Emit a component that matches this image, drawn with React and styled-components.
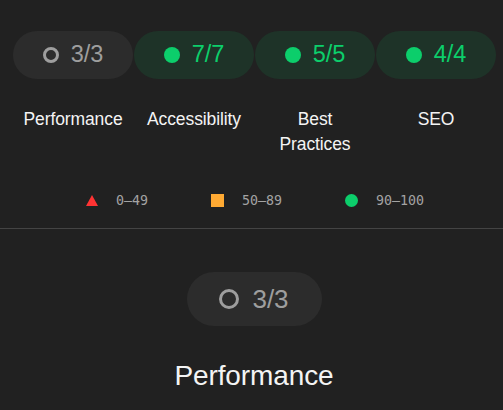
import React from "react";
import styled, { createGlobalStyle } from "styled-components";

const Global = createGlobalStyle`
  html, body { margin: 0; padding: 0; background: #212121; }
  body { font-family: "Liberation Sans", Arial, sans-serif; }
`;

const Page = styled.div`
  width: 503px;
  height: 410px;
  overflow: hidden;
  background: #212121;
  padding-top: 31px;
  box-sizing: border-box;
`;

const Container = styled.div`
  width: 484px;
  margin-left: 13px;
`;

const Gauges = styled.div`
  display: grid;
  grid-template-columns: repeat(4, 120px);
  column-gap: 1px;
`;

const Gauge = styled.div`
  display: flex;
  flex-direction: column;
  align-items: center;
`;

const Pill = styled.div`
  display: flex;
  align-items: center;
  justify-content: center;
  gap: ${(p) => (p.$big ? 13 : 12)}px;
  width: ${(p) => (p.$big ? 135 : 120)}px;
  height: ${(p) => (p.$big ? 54 : 48)}px;
  border-radius: 27px;
  background: ${(p) => (p.$pass ? "#1e3328" : "#2c2c2c")};
  color: ${(p) => (p.$pass ? "#0cce6b" : "#9e9e9e")};
  font-size: ${(p) => (p.$big ? 26 : 23.5)}px;
  line-height: 1;
  box-sizing: border-box;
`;

const Ring = styled.span`
  display: block;
  width: ${(p) => p.$size}px;
  height: ${(p) => p.$size}px;
  border-radius: 50%;
  box-sizing: border-box;
  border: ${(p) => (p.$pass ? "none" : `${p.$size > 17 ? 3.5 : 3}px solid #9e9e9e`)};
  background: ${(p) => (p.$pass ? "#0cce6b" : "transparent")};
  flex: none;
`;

const Label = styled.div`
  margin-top: 28px;
  color: #f4f4f4;
  font-size: 17.5px;
  line-height: 25px;
  text-align: center;
  letter-spacing: -0.1px;
  width: 120px;
`;

const Legend = styled.div`
  display: flex;
  justify-content: center;
  align-items: center;
  height: 20px;
  margin-top: 33px;
  gap: 63px;
`;

const LegendItem = styled.div`
  display: flex;
  align-items: center;
  gap: 18px;
  font-family: "DejaVu Sans Mono", "Liberation Mono", monospace;
  font-size: 13.3px;
  color: #a3a3a3;
`;

const Triangle = styled.span`
  display: block;
  width: 0;
  height: 0;
  border-left: 6px solid transparent;
  border-right: 6px solid transparent;
  border-bottom: 11px solid #ff3333;
`;

const Square = styled.span`
  display: block;
  width: 13px;
  height: 13px;
  background: #ffaa33;
`;

const Dot = styled.span`
  display: block;
  width: 13px;
  height: 13px;
  border-radius: 50%;
  background: #0cce6b;
`;

const Divider = styled.hr`
  margin: 18px 0 0 0;
  border: none;
  border-top: 1px solid #444444;
  width: 503px;
`;

const Detail = styled.div`
  display: flex;
  flex-direction: column;
  align-items: center;
  width: 484px;
  margin-left: 12px;
  margin-top: 43px;
`;

const BigLabel = styled.div`
  margin-top: 34px;
  color: #f4f4f4;
  font-size: 28px;
  line-height: 32px;
  letter-spacing: -0.1px;
`;

const gauges = [
  { score: "3/3", label: "Performance", pass: false },
  { score: "7/7", label: "Accessibility", pass: true },
  { score: "5/5", label: "Best Practices", pass: true },
  { score: "4/4", label: "SEO", pass: true },
];

export default function App() {
  return (
    <>
      <Global />
      <Page>
        <Container>
          <Gauges>
            {gauges.map((g) => (
              <Gauge key={g.label}>
                <Pill $pass={g.pass}>
                  <Ring $pass={g.pass} $size={16} />
                  <span>{g.score}</span>
                </Pill>
                <Label>{g.label === "Best Practices" ? <>Best<br />Practices</> : g.label}</Label>
              </Gauge>
            ))}
          </Gauges>
          <Legend>
            <LegendItem>
              <Triangle />
              <span>0–49</span>
            </LegendItem>
            <LegendItem>
              <Square />
              <span>50–89</span>
            </LegendItem>
            <LegendItem>
              <Dot />
              <span>90–100</span>
            </LegendItem>
          </Legend>
        </Container>
        <Divider />
        <Detail>
          <Pill $big>
            <Ring $size={20} />
            <span>3/3</span>
          </Pill>
          <BigLabel>Performance</BigLabel>
        </Detail>
      </Page>
    </>
  );
}
